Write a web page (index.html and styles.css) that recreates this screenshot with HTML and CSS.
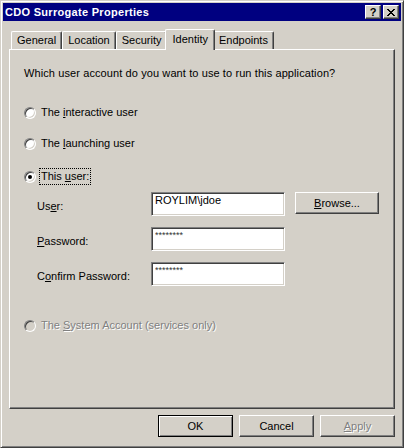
FILE: index.html
```html
<!DOCTYPE html>
<html lang="en">
<head>
  <meta charset="UTF-8">
  <title>CDO Surrogate Properties</title>
  <link rel="stylesheet" href="styles.css">
</head>
<body>

<div class="window">
  <div class="titlebar">
    <span class="title">CDO Surrogate Properties</span>
    <div class="caption-btns">
      <button class="cap-btn">?</button>
      <button class="cap-btn">
        <svg width="8" height="7" viewBox="0 0 8 7" shape-rendering="crispEdges">
          <path d="M0 0h2v1h-2zM6 0h2v1h-2zM1 1h2v1h-2zM5 1h2v1h-2zM2 2h4v1h-4zM3 3h2v1h-2zM2 4h4v1h-4zM1 5h2v1h-2zM5 5h2v1h-2zM0 6h2v1h-2zM6 6h2v1h-2z" fill="#000"/>
        </svg>
      </button>
    </div>
  </div>

  <div class="tabs">
    <div class="tab">General</div>
    <div class="tab">Location</div>
    <div class="tab">Security</div>
    <div class="tab active">Identity</div>
    <div class="tab">Endpoints</div>
  </div>

  <div class="panel">
    <p class="question">Which user account do you want to use to run this application?</p>

    <div class="radio-row opt-1"><span class="radio"></span><span>The <u>i</u>nteractive user</span></div>
    <div class="radio-row opt-2"><span class="radio"></span><span>The <u>l</u>aunching user</span></div>
    <div class="radio-row opt-3"><span class="radio checked"></span><span class="focus">This <u>u</u>ser:</span></div>

    <div class="field-row first">
      <label class="field-label">Us<u>e</u>r:</label>
      <input class="edit" type="text" value="ROYLIM\jdoe">
      <button class="btn browse"><u>B</u>rowse...</button>
    </div>
    <div class="field-row">
      <label class="field-label"><u>P</u>assword:</label>
      <input class="edit secret" type="text" value="********">
    </div>
    <div class="field-row">
      <label class="field-label">C<u>o</u>nfirm Password:</label>
      <input class="edit secret" type="text" value="********">
    </div>

    <div class="radio-row opt-4 disabled"><span class="radio"></span><span>The <u>S</u>ystem Account (services only)</span></div>
  </div>

  <div class="buttons">
    <button class="btn default">OK</button>
    <button class="btn">Cancel</button>
    <button class="btn disabled"><u>A</u>pply</button>
  </div>
</div>

</body>
</html>
```

FILE: styles.css
```css
body { margin: 0; font-family: "Liberation Sans", Arial, sans-serif; font-size: 11px; color: #000; }
u { text-decoration-thickness: 1px; text-underline-offset: 1px; }

.window { width: 404px; height: 448px; box-sizing: border-box; background: #d4d0c8; border: 1px solid; border-color: #d4d0c8 #404040 #404040 #d4d0c8; box-shadow: inset 1px 1px #fff, inset -1px -1px #808080; padding: 2px; display: flex; flex-direction: column; }

.titlebar { height: 18px; flex: none; background: #000080; color: #fff; display: flex; align-items: center; justify-content: space-between; padding: 0 2px; font-weight: bold; }
.title { letter-spacing: 0.3px; }
.caption-btns { display: flex; gap: 2px; }
.cap-btn { width: 16px; height: 14px; box-sizing: border-box; padding: 0; background: #d4d0c8; border: 1px solid; border-color: #fff #404040 #404040 #fff; box-shadow: inset -1px -1px #808080; display: flex; align-items: center; justify-content: center; font: bold 11px "Liberation Sans", Arial, sans-serif; color: #000; line-height: 12px; }

.tabs { display: flex; align-items: flex-end; height: 20px; flex: none; margin: 8px 0 0 8px; position: relative; z-index: 1; }
.tab { height: 18px; box-sizing: border-box; padding: 0 5px; border-left: 1px solid #fff; border-top: 1px solid #fff; border-right: 1px solid #404040; box-shadow: inset -1px 0 #808080; border-radius: 2px 2px 0 0; line-height: 16px; background: #d4d0c8; }
.tab.active { height: 21px; margin: 0 -2px -1px; padding: 0 6px; line-height: 18px; position: relative; z-index: 2; }

.panel { height: 360px; flex: none; box-sizing: border-box; margin: 0 6px 0 6px; border: 1px solid; border-color: #fff #404040 #404040 #fff; box-shadow: inset -1px -1px #808080; padding: 17px 0 0 14px; }
.question { margin: 0; line-height: 13px; letter-spacing: 0.1px; }

.radio-row { display: flex; align-items: center; gap: 5px; height: 13px; line-height: 13px; }
.opt-1 { margin-top: 26px; }
.opt-2 { margin-top: 18px; }
.opt-3 { margin-top: 20px; }
.opt-4 { margin-top: 33px; }
.radio { width: 12px; height: 12px; flex: none; box-sizing: border-box; border-radius: 50%; border: 1px solid; border-color: #808080 #fff #fff #808080; background: #fff; box-shadow: inset 1px 1px #404040, inset -1px -1px #d4d0c8; position: relative; }
.radio.checked::after { content: ""; position: absolute; left: 3px; top: 3px; width: 4px; height: 4px; border-radius: 50%; background: #000; }
.focus { outline: 1px dotted #000; outline-offset: 1px; }
.disabled { color: #808080; text-shadow: 1px 1px #fff; }
.disabled .radio { background: #d4d0c8; }

.field-row { display: flex; align-items: flex-start; margin: 11px 0 0 13px; }
.field-row.first { margin-top: 9px; }
.field-label { width: 114px; flex: none; padding-top: 8px; line-height: 13px; }
.edit { width: 134px; height: 24px; box-sizing: border-box; margin: 0; padding: 0 3px 9px; border: 1px solid; border-color: #808080 #fff #fff #808080; box-shadow: inset 1px 1px #404040, inset -1px -1px #d4d0c8; background: #fff; font: 11px "Liberation Sans", Arial, sans-serif; line-height: 13px; color: #000; outline: none; }
.edit.secret { font-size: 9px; color: #333; }

.btn { width: 75px; height: 22px; box-sizing: border-box; padding: 0; background: #d4d0c8; border: 1px solid; border-color: #fff #404040 #404040 #fff; box-shadow: inset -1px -1px #808080; font: 11px "Liberation Sans", Arial, sans-serif; color: #000; }
.btn.browse { width: 84px; margin-left: 10px; }
.btn.default { border-color: #000; box-shadow: inset 1px 1px #fff, inset -1px -1px #808080; }
.btn.disabled { color: #808080; text-shadow: 1px 1px #fff; }

.buttons { display: flex; justify-content: flex-end; gap: 6px; margin: 6px 6px 0 0; }
```
